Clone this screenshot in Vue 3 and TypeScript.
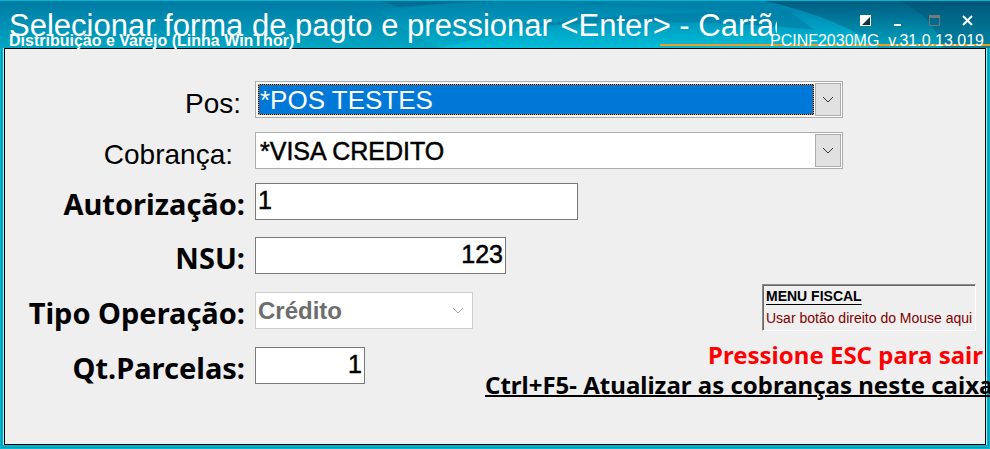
<script setup lang="ts">
import { ref } from 'vue'

const pos = ref('*POS TESTES')
const cobranca = ref('*VISA CREDITO')
const autorizacao = ref('1')
const nsu = ref('123')
const tipo = ref('Crédito')
const parcelas = ref('1')
</script>

<template>
  <main class="window">
    <header class="titlebar">
      <svg class="waves" viewBox="0 0 990 48" preserveAspectRatio="none" aria-hidden="true">
        <defs>
          <linearGradient id="base" x1="0" y1="0" x2="0" y2="1">
            <stop offset="0" stop-color="#0079a3" />
            <stop offset="1" stop-color="#00a6c2" />
          </linearGradient>
          <linearGradient id="glow" x1="0" y1="0" x2="0" y2="1">
            <stop offset="0" stop-color="#008db5" />
            <stop offset="1" stop-color="#00c0dc" />
          </linearGradient>
          <linearGradient id="deep" x1="0" y1="0" x2="0" y2="1">
            <stop offset="0" stop-color="#00567a" />
            <stop offset="1" stop-color="#00a0bd" />
          </linearGradient>
        </defs>
        <rect width="990" height="48" fill="url(#base)" />
        <path d="M380 12Q430 2 520 1H990V48H440Q400 30 380 12Z" fill="url(#glow)" opacity=".35" />
        <path d="M440 48Q540 20 690 14H990V48Z" fill="url(#glow)" opacity=".8" />
        <path d="M400 7Q450 2 500 1H380Z" fill="#00668f" opacity=".7" />
        <path d="M520 27Q630 10 790 12L815 30Q680 16 520 27Z" fill="#007ba3" opacity=".6" />
        <path d="M500 1H765Q782 6 795 13Q650 8 500 1Z" fill="#007fa8" opacity=".6" />
        <path d="M765 1H990V48H880Q840 18 765 1Z" fill="url(#deep)" opacity=".85" />
        <path d="M900 1Q935 18 942 48H990V1Z" fill="#004c6e" opacity=".35" />
        <rect width="990" height="1" fill="#00b9cf" />
        <rect x="660" y="44" width="330" height="2" fill="#f59a1c" />
      </svg>
      <h1 class="title">Selecionar forma de pagto e pressionar &lt;Enter&gt; - Cartão</h1>
      <p class="subtitle">Distribuição e Varejo (Linha WinThor)</p>
      <div class="buttons">
        <button type="button" aria-label="Tema">
          <svg width="12" height="12" viewBox="0 0 12 12"><path d="M0 0H11V11H0Z" fill="#fff" /><path d="M10 2V10H2Z" fill="#10343f" /></svg>
        </button>
        <button type="button" aria-label="Minimizar">
          <svg width="12" height="12" viewBox="0 0 12 12"><path d="M0 9H7V11H0Z" fill="#fff" /></svg>
        </button>
        <button type="button" aria-label="Maximizar" disabled>
          <svg width="12" height="12" viewBox="0 0 12 12"><path d="M1.5 .5H11.5V10.5H1.5Z" fill="none" stroke="#76797c" /><path d="M1 0H12V3H1Z" fill="#76797c" /></svg>
        </button>
        <button type="button" aria-label="Fechar">
          <svg width="12" height="12" viewBox="0 0 12 12"><path d="M1 1L10 10M10 1L1 10" stroke="#fff" stroke-width="2" /></svg>
        </button>
      </div>
      <p class="version">PCINF2030MG&nbsp; v.31.0.13.019</p>
    </header>

    <section class="panel">
      <form class="form" @submit.prevent>
        <div class="group">
          <div class="row">
            <label class="plain" for="pos">Pos:</label>
            <span class="combo focused">
              <select id="pos" v-model="pos"><option>*POS TESTES</option></select>
              <span class="arrow"><svg width="12" height="8" viewBox="0 0 12 8"><path d="M1 1L6 6L11 1" /></svg></span>
            </span>
          </div>
          <div class="row">
            <label class="plain inset" for="cobranca">Cobrança:</label>
            <span class="combo">
              <select id="cobranca" v-model="cobranca"><option>*VISA CREDITO</option></select>
              <span class="arrow"><svg width="12" height="8" viewBox="0 0 12 8"><path d="M1 1L6 6L11 1" /></svg></span>
            </span>
          </div>
          <div class="row">
            <label for="autorizacao">Autorização:</label>
            <input id="autorizacao" v-model="autorizacao" class="field wide" type="text" />
          </div>
        </div>
        <div class="group loose">
          <div class="row">
            <label for="nsu">NSU:</label>
            <input id="nsu" v-model="nsu" class="field medium" type="text" />
          </div>
          <div class="row">
            <label for="tipo">Tipo Operação:</label>
            <span class="combo off">
              <select id="tipo" v-model="tipo" disabled><option>Crédito</option></select>
              <span class="arrow"><svg width="12" height="8" viewBox="0 0 12 8"><path d="M1 1L6 6L11 1" /></svg></span>
            </span>
          </div>
          <div class="row">
            <label for="parcelas">Qt.Parcelas:</label>
            <input id="parcelas" v-model="parcelas" class="field small" type="text" />
          </div>
        </div>
      </form>

      <aside class="notes">
        <div class="fiscal">
          <strong>MENU FISCAL</strong>
          <span>Usar botão direito do Mouse aqui</span>
        </div>
        <p class="exit">Pressione ESC para sair</p>
        <p class="refresh">Ctrl+F5- Atualizar as cobranças neste caixa</p>
      </aside>
    </section>
  </main>
</template>

<style>
body {
  background: #00b5cd;
}
</style>

<style scoped>
* {
  box-sizing: border-box;
}
.window {
  min-height: 100vh;
  display: flex;
  flex-direction: column;
  overflow: hidden;
  background: #00b5cd;
  font-family: "Liberation Sans", Arial, sans-serif;
  box-shadow: inset 0 0 0 1px #00b9cf, inset 0 0 0 2px #009bb5;
}
h1,
p {
  margin: 0;
  font-weight: 400;
  white-space: nowrap;
}
.titlebar {
  position: relative;
  display: grid;
  grid-template-columns: minmax(0, 1fr) 207px;
  grid-template-rows: 48px;
  color: #fff;
  padding: 0 6px 0 9px;
}
.titlebar > * {
  grid-row: 1;
}
.waves {
  position: absolute;
  inset: 0;
  width: 100%;
  height: 48px;
}
.title,
.subtitle,
.buttons,
.version {
  position: relative;
}
.title {
  grid-column: 1;
  padding-top: 7px;
  font-size: 31px;
  line-height: 38px;
  overflow: hidden;
}
.subtitle {
  grid-column: 1;
  align-self: end;
  font-size: 16px;
  line-height: 15px;
  font-weight: 700;
}
.buttons {
  grid-column: 2;
  align-self: start;
  justify-self: end;
  display: flex;
  gap: 22px;
  padding: 15px 10px 0 0;
}
.buttons button {
  display: block;
  padding: 0;
  border: 0;
  background: none;
  line-height: 0;
}
.version {
  grid-column: 2;
  align-self: end;
  justify-self: end;
  font-size: 16px;
  line-height: 15px;
}
.panel {
  flex: 1;
  display: grid;
  margin: 0 4px 4px;
  border: 1px solid #000;
  background: #efefef;
  box-shadow: -1px 0 #b5e4ec, 1px 0 #b5e4ec;
}
.form,
.notes {
  grid-area: 1 / 1;
}
.form {
  display: flex;
  flex-direction: column;
  gap: 17px;
  padding-top: 32px;
}
.group {
  display: grid;
  gap: 14px;
}
.loose {
  gap: 18px;
}
.row {
  display: grid;
  grid-template-columns: 240px minmax(0, 1fr);
  gap: 10px;
  height: 37px;
}
label {
  padding-top: 2px;
  text-align: right;
  font: 700 29px/38px "Noto Sans", "Open Sans", sans-serif;
  white-space: nowrap;
}
.plain {
  padding: 4px 4px 0 0;
  font: 400 28px/38px "Liberation Sans", Arial, sans-serif;
}
.inset {
  padding-right: 12px;
}
.field,
.combo {
  width: 100%;
  height: 37px;
  border: 1px solid #7a7a7a;
  border-radius: 0;
  background: #fff;
  color: #000;
  font: 400 25px/30px "Liberation Sans", Arial, sans-serif;
  -webkit-text-stroke: 0.5px currentColor;
  outline: 0;
}
.field {
  padding: 0 2px 2px;
}
.wide {
  max-width: 323px;
}
.medium {
  max-width: 251px;
  text-align: right;
}
.small {
  max-width: 110px;
  text-align: right;
}
.combo {
  max-width: 588px;
  display: grid;
  grid-template-columns: minmax(0, 1fr) 26px;
  grid-template-rows: minmax(0, 1fr);
  padding: 2px 1px 2px 2px;
  border-color: #abadb3;
}
.combo select {
  appearance: none;
  grid-area: 1 / 1 / 2 / 3;
  width: calc(100% - 27px);
  height: 100%;
  padding: 0 2px;
  border: 0;
  border-radius: 0;
  outline: 0;
  background: transparent;
  color: inherit;
  font: inherit;
}
.focused select {
  border: 1px dotted #ff8728;
  padding: 0 1px;
  background: linear-gradient(#0078d7, #0078d7) padding-box, #000 border-box;
  color: #fff;
  font-size: 26px;
  -webkit-text-stroke: 0;
}
.arrow {
  grid-area: 1 / 2;
  display: grid;
  place-items: center;
  margin: -1px 0;
  border: 1px solid #adadad;
  background: #e1e1e1;
  pointer-events: none;
}
.arrow path {
  fill: none;
  stroke: #333;
  stroke-width: 1;
}
.off {
  max-width: 218px;
  border-color: #ccc;
  color: #6d6d6d;
  font-size: 24px;
  font-weight: 700;
  -webkit-text-stroke: 0;
}
.off select {
  opacity: 1;
  padding: 0;
}
.off .arrow {
  border: 0;
  background: none;
}
.off .arrow path {
  stroke: #aaa;
}
.notes {
  align-self: end;
  justify-self: end;
  width: 500px;
  display: flex;
  flex-direction: column;
  align-items: flex-end;
  padding-bottom: 44px;
  pointer-events: none;
}
.fiscal {
  width: 214px;
  height: 47px;
  margin: 0 9px 9px 0;
  padding: 0 0 0 3px;
  border: 1px solid;
  border-color: #8a8a8a #fff #fff #8a8a8a;
  box-shadow: inset 1px 1px #696969;
  overflow: hidden;
  font: 400 14px/22px "Liberation Sans", Arial, sans-serif;
  color: #800000;
  white-space: nowrap;
}
.fiscal strong,
.fiscal span {
  display: block;
}
.fiscal strong {
  color: #000;
  text-decoration: underline;
  text-underline-offset: 3px;
}
.exit,
.refresh {
  font: 700 24px/30px "Noto Sans", "Open Sans", sans-serif;
}
.exit {
  padding-right: 2px;
  color: #f00;
}
.refresh {
  align-self: flex-start;
  text-decoration: underline;
  text-decoration-thickness: 2px;
}
</style>
